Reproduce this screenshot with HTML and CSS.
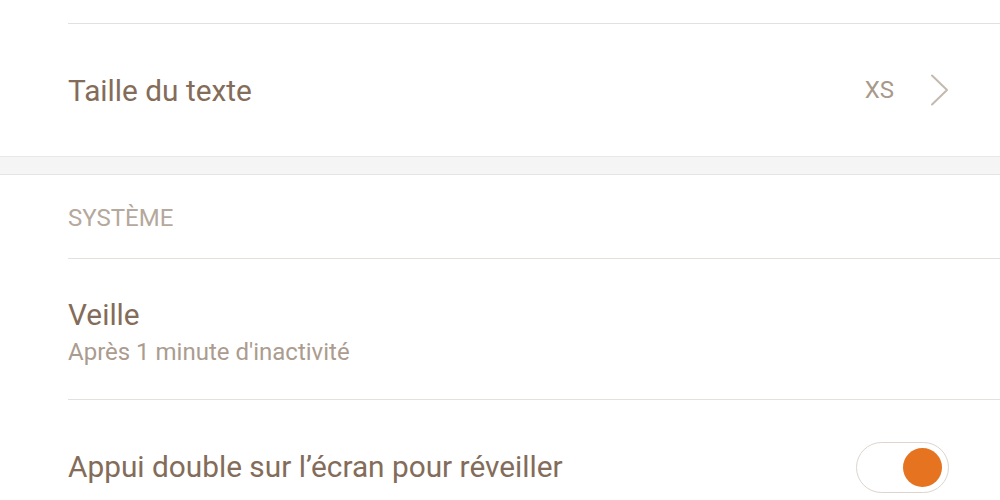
FILE: index.html
```html
<!DOCTYPE html>
<html lang="fr">
<head>
<meta charset="utf-8">
<link rel="stylesheet" href="styles.css">
</head>
<body>
<div class="group">
  <div class="prev-tail"></div>
  <div class="row row-nav">
    <div class="title">Taille du texte</div>
    <div class="trail">
      <span class="value">XS</span>
      <svg class="chev" width="20" height="32" viewBox="0 0 20 32"><path d="M2 1.5 L17 16 L2 30.5" fill="none" stroke="#c4b9ae" stroke-width="2" stroke-linecap="round" stroke-linejoin="round"/></svg>
    </div>
  </div>
</div>
<div class="band"></div>
<div class="group">
  <div class="header">SYSTÈME</div>
  <div class="row row-two">
    <div class="texts">
      <div class="title">Veille</div>
      <div class="sub">Après 1 minute d'inactivité</div>
    </div>
  </div>
  <div class="row row-toggle">
    <div class="title">Appui double sur l’écran pour réveiller</div>
    <div class="toggle"><span class="knob"></span></div>
  </div>
</div>
</body>
</html>
```
FILE: styles.css
```css
html, body {
  margin: 0;
  background: #ffffff;
  font-family: Roboto, "Liberation Sans", sans-serif;
  overflow: hidden;
}
.group {
  background: #ffffff;
  padding-left: 68px;
}
.prev-tail {
  height: 23px;
  border-bottom: 1px solid #e3e0dd;
}
.row {
  display: flex;
  align-items: center;
  justify-content: space-between;
  padding-right: 50px;
  box-sizing: border-box;
}
.row-nav {
  height: 132px;
  padding-top: 2px;
}
.title {
  font-size: 29.8px;
  line-height: 34px;
  color: #836c59;
}
.trail {
  display: flex;
  align-items: center;
  gap: 36px;
  margin-top: -2px;
}
.value {
  font-size: 24px;
  color: #a8998b;
}
.chev {
  display: block;
}
.band {
  height: 17px;
  background: #f5f5f5;
  border-top: 1px solid #ebe9e7;
  border-bottom: 1px solid #e6e4e2;
}
.header {
  height: 84px;
  box-sizing: border-box;
  display: flex;
  align-items: center;
  padding-top: 2px;
  font-size: 24px;
  color: #b5a89c;
  border-bottom: 1px solid #e3e0dd;
}
.row-two {
  height: 141px;
  border-bottom: 1px solid #e3e0dd;
}
.texts {
  display: flex;
  flex-direction: column;
  gap: 6px;
  margin-top: 6px;
}
.sub {
  font-size: 24px;
  line-height: 28px;
  color: #ab9c8f;
}
.row-toggle {
  height: 134px;
}
.toggle {
  width: 93px;
  height: 51px;
  box-sizing: border-box;
  border: 1.5px solid #ddd5cd;
  border-radius: 26px;
  display: flex;
  align-items: center;
  justify-content: flex-end;
  padding-right: 6px;
  margin-right: 1px;
}
.knob {
  width: 39px;
  height: 39px;
  border-radius: 50%;
  background: #e6731f;
}
```
